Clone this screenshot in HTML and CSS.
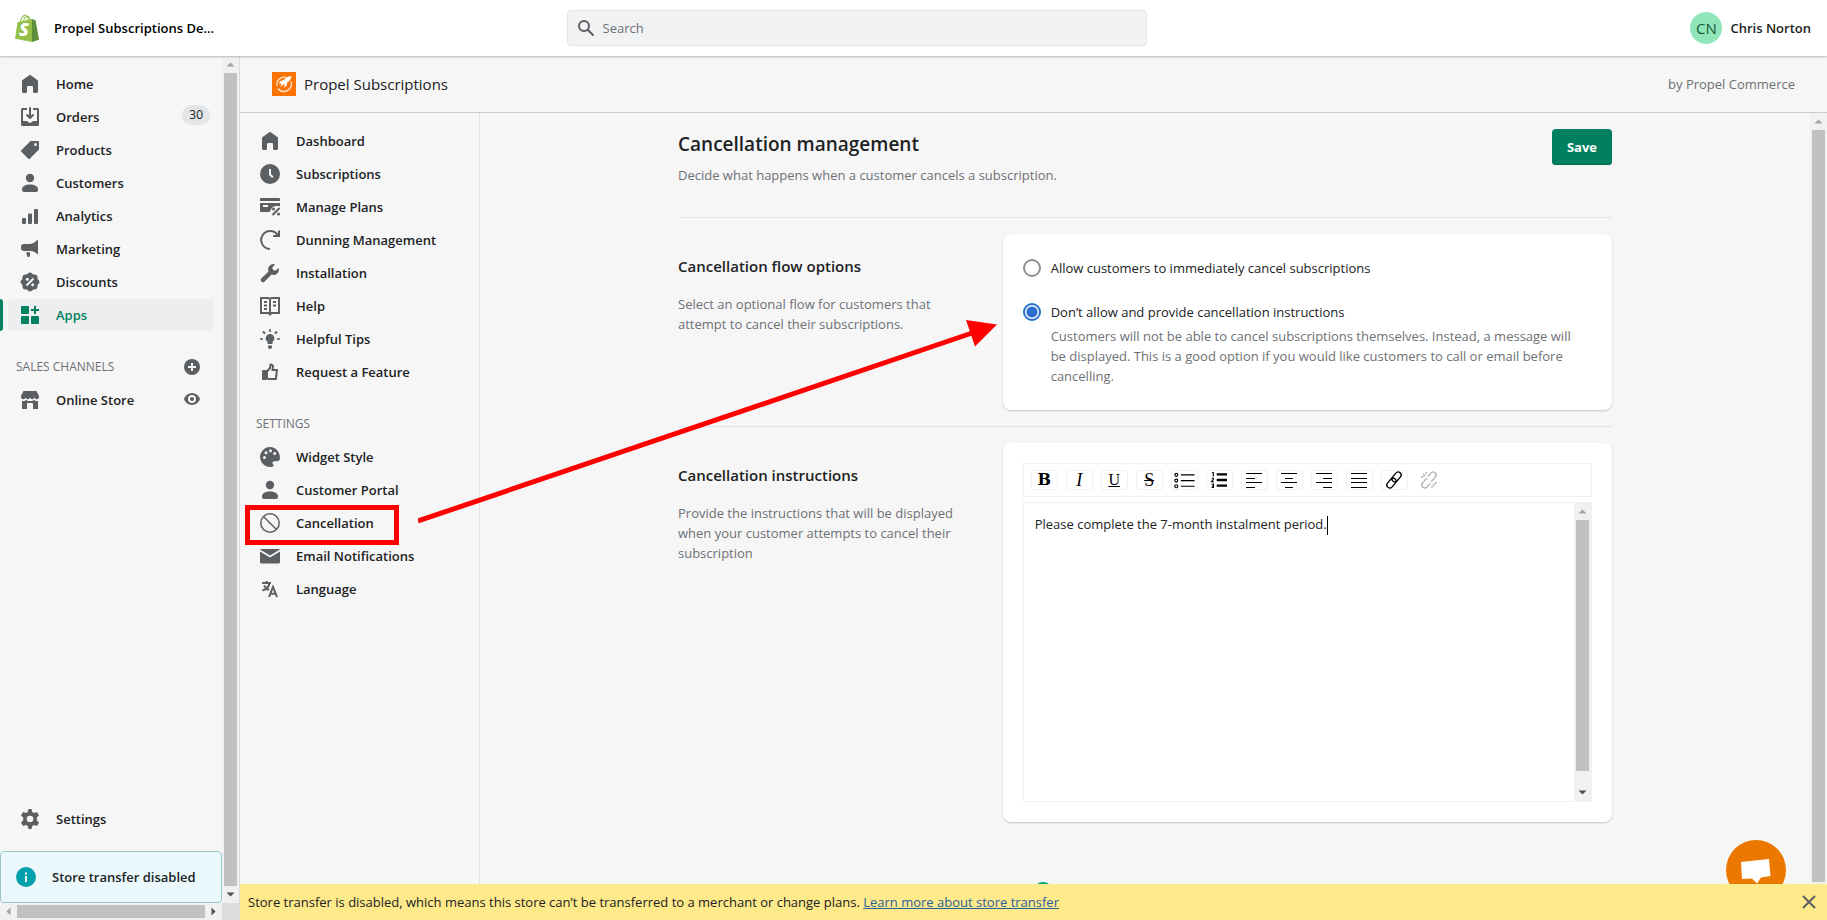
FILE: index.html
```
<!DOCTYPE html>
<html lang="en">
<head>
    <meta charset="UTF-8">
    <meta name="viewport" content="width=device-width, initial-scale=1.0">
    <title>Cancellation management</title>
    <link rel="stylesheet" href="styles.css">
</head>
<body>

    <!-- Shared icons -->
    <svg class="sprite" aria-hidden="true">
        <symbol id="home" viewBox="0 0 20 20"><path d="M18 7.261V17.5c0 .841-.672 1.5-1.5 1.5h-2c-.828 0-1.5-.659-1.5-1.5V13c0-1-1-1-1-1H8s-1 0-1 1v4.500c0 .841-.672 1.500-1.500 1.500h-2c-.828 0-1.500-.659-1.500-1.500V7.261a1.500 1.500 0 0 1 .615-1.210l6.590-4.820a1.481 1.481 0 0 1 1.590 0l6.590 4.820A1.500 1.500 0 0 1 18 7.260z"/></symbol>
        <symbol id="person" viewBox="0 0 20 20"><circle cx="10" cy="5" r="4.200"/><path d="M2 16c0-2.500 3.500-4.500 8-4.500s8 2 8 4.500v1a2 2 0 0 1-2 2H4a2 2 0 0 1-2-2z"/></symbol>
        <symbol id="arrow-up" viewBox="0 0 17 17"><path d="M4.500 10.500h8l-4-4z"/></symbol>
        <symbol id="arrow-down" viewBox="0 0 17 17"><path d="M4.500 6.500h8l-4 4z"/></symbol>
        <symbol id="arrow-left" viewBox="0 0 17 17"><path d="M10.500 4.500v8l-4-4z"/></symbol>
        <symbol id="arrow-right" viewBox="0 0 17 17"><path d="M6.500 4.500v8l4-4z"/></symbol>
    </svg>

    <header class="topbar">
        <div class="store">
            <svg class="store-logo" viewBox="0 0 24 28" aria-hidden="true">
                <path d="M5.500 8C6 3.500 8.500 1 10.500 1c1.500 0 2.500 2 2.700 6M8.500 7.500C9 4 11 2 12.700 2.300c1.600.3 2.300 2.500 2.300 4.500" fill="none" stroke="#95bf47" stroke-width="1.100"/>
                <path d="M2.500 8.200 17 5v23L0 24.800z" fill="#95bf47"/>
                <path d="m17 5 3.600 1.200L24 25.800 17 28z" fill="#5e8e3e"/>
                <text x="4" y="22" class="store-logo-letter">S</text>
            </svg>
            <span>Propel Subscriptions De...</span>
        </div>
        <label class="search">
            <svg class="icon" viewBox="0 0 20 20" aria-hidden="true"><path d="M8 12a4 4 0 1 1 0-8 4 4 0 0 1 0 8zm9.707 4.293-4.820-4.820A5.968 5.968 0 0 0 14 8 6 6 0 1 0 2 8a6 6 0 0 0 6 6 5.968 5.968 0 0 0 3.473-1.113l4.820 4.820a1 1 0 0 0 1.414-1.414z"/></svg>
            <input type="text" placeholder="Search" aria-label="Search">
        </label>
        <div class="user">
            <span class="avatar">CN</span>
            <span>Chris Norton</span>
        </div>
    </header>

    <div class="layout">
        <aside class="sidebar">
            <nav class="sidebar-nav">
                <a class="nav-item" href="#"><svg class="icon"><use href="#home"/></svg>Home</a>
                <a class="nav-item" href="#">
                    <svg class="icon" viewBox="0 0 20 20"><path d="M11 1a1 1 0 1 0-2 0v7.586L7.707 7.293a1 1 0 0 0-1.414 1.414l3 3a1 1 0 0 0 1.414 0l3-3a1 1 0 0 0-1.414-1.414L11 8.586V1z"/><path d="M3 14V3h4V1H2.500A1.500 1.500 0 0 0 1 2.500v15A1.500 1.500 0 0 0 2.500 19h15a1.500 1.500 0 0 0 1.500-1.500v-15A1.500 1.500 0 0 0 17.500 1H13v2h4v11h-3.500c-.775 0-1.388.662-1.926 1.244l-.110.120A1.994 1.994 0 0 1 10 16a1.994 1.994 0 0 1-1.463-.637l-.111-.120C7.888 14.664 7.275 14 6.500 14H3z"/></svg>
                    Orders
                    <span class="badge">30</span>
                </a>
                <a class="nav-item" href="#">
                    <svg class="icon" viewBox="0 0 20 20"><path fill-rule="evenodd" d="M10.293 1.293A1 1 0 0 1 11 1h7a1 1 0 0 1 1 1v7a1 1 0 0 1-.293.707l-9 9a1 1 0 0 1-1.414 0l-7-7a1 1 0 0 1 0-1.414l9-9zM15.500 6a1.500 1.500 0 1 0 0-3 1.500 1.500 0 0 0 0 3z"/></svg>
                    Products
                </a>
                <a class="nav-item" href="#"><svg class="icon"><use href="#person"/></svg>Customers</a>
                <a class="nav-item" href="#">
                    <svg class="icon" viewBox="0 0 20 20"><rect x="2" y="12" width="4" height="6" rx="1"/><rect x="8" y="7.500" width="4" height="10.500" rx="1"/><rect x="14" y="3" width="4" height="15" rx="1"/></svg>
                    Analytics
                </a>
                <a class="nav-item" href="#">
                    <svg class="icon" viewBox="0 0 20 20"><path d="M18 1.500v13.200a.5.5 0 0 1-.8.400C15 13 13 12.200 10.500 12H4a3 3 0 0 1-3-3V8a3 3 0 0 1 3-3h6c2.800-.2 5-1.700 7-3.700.400-.4 1-.3 1 .2zM6 13.200h4v3.300a1.500 1.500 0 0 1-2.600 1z"/></svg>
                    Marketing
                </a>
                <a class="nav-item" href="#">
                    <svg class="icon" viewBox="0 0 20 20"><rect x="2.500" y="2.500" width="15" height="15" rx="3"/><rect x="2.500" y="2.500" width="15" height="15" rx="3" transform="rotate(45 10 10)"/><path d="m6.500 13.500 7-7" class="line-light"/><circle cx="7.300" cy="7.300" r="1.500" class="fill-light"/><circle cx="12.700" cy="12.700" r="1.500" class="fill-light"/></svg>
                    Discounts
                </a>
                <a class="nav-item active" href="#">
                    <svg class="icon" viewBox="0 0 20 20"><rect x="1" y="1" width="8" height="8" rx="1"/><rect x="1" y="11" width="8" height="8" rx="1"/><rect x="11" y="11" width="8" height="8" rx="1"/><path d="M14 1h2v3h3v2h-3v3h-2V6h-3V4h3z"/></svg>
                    Apps
                </a>

                <div class="nav-heading">
                    SALES CHANNELS
                    <button class="icon-button" type="button" aria-label="Add sales channel">
                        <svg class="icon icon-small" viewBox="0 0 16 16"><circle cx="8" cy="8" r="8"/><path d="M8 4v8M4 8h8" class="line-light"/></svg>
                    </button>
                </div>
                <a class="nav-item" href="#">
                    <svg class="icon" viewBox="0 0 20 20"><path d="M3.500 1h13L19 6v1.500a2.300 2.300 0 0 1-4.500 0 2.300 2.300 0 0 1-4.500 0 2.300 2.300 0 0 1-4.500 0A2.300 2.300 0 0 1 1 7.500V6z"/><path d="M2 11h2.500L6 10l2 1h4l2-1 1.500 1H18v7.500a.5.5 0 0 1-.5.500H13v-5a1 1 0 0 0-1-1H8a1 1 0 0 0-1 1v5H2.500a.5.5 0 0 1-.5-.5z"/></svg>
                    Online Store
                    <svg class="icon icon-small nav-eye" viewBox="0 0 16 16"><path fill-rule="evenodd" d="M8 2C3.500 2 .5 6 0 8c.5 2 3.500 6 8 6s7.500-4 8-6c-.5-2-3.500-6-8-6zm0 10a4 4 0 1 1 0-8 4 4 0 0 1 0 8z"/><circle cx="8" cy="8" r="2"/></svg>
                </a>

                <a class="nav-item nav-settings" href="#">
                    <svg class="icon" viewBox="0 0 20 20"><path fill-rule="evenodd" d="M8.500 0h3l.8 3 1.700 1 3-.9 2 3.300-2.200 2.200v2.800l2.200 2.200-2 3.300-3-.9-1.700 1-.8 3h-3l-.8-3-1.700-1-3 .9-2-3.300 2.200-2.200V8.600L1 6.400l2-3.300 3 .9 1.700-1zM10 13.300a3.300 3.300 0 1 0 0-6.600 3.300 3.300 0 0 0 0 6.600z"/></svg>
                    Settings
                </a>
                <div class="transfer-notice">
                    <svg class="icon" viewBox="0 0 20 20"><circle cx="10" cy="10" r="10"/><path d="M9 9h2v6H9zM9 5.500h2v2H9z" class="fill-light"/></svg>
                    Store transfer disabled
                </div>
            </nav>
            <div class="scrollbar" aria-hidden="true">
                <svg class="scroll-arrow muted"><use href="#arrow-up"/></svg>
                <div class="scroll-track"><div class="scroll-thumb"></div></div>
                <svg class="scroll-arrow"><use href="#arrow-down"/></svg>
            </div>
            <div class="scrollbar horizontal" aria-hidden="true">
                <svg class="scroll-arrow muted"><use href="#arrow-left"/></svg>
                <div class="scroll-track"><div class="scroll-thumb"></div></div>
                <svg class="scroll-arrow"><use href="#arrow-right"/></svg>
            </div>
            <div class="scroll-corner"></div>
        </aside>

        <main class="app">
            <div class="app-header">
                <svg class="app-logo" viewBox="0 0 24 24" aria-hidden="true">
                    <rect width="24" height="24" fill="#f97306"/>
                    <path d="M14 5.300A7.500 7.500 0 0 0 5 14M19 9.500A7.500 7.500 0 0 1 9.500 19M6 16.500A7.500 7.500 0 0 0 15 18.800" fill="none" stroke="#ffe3cc" stroke-width="1.300"/>
                    <path d="M19.500 4c-3.600.3-6.200 1.600-7.700 4.100L8.600 9l-2 2.800 3-.3-1.300 3.800 3.200-3.100 1.200.2-.6 3.400 2.600-2.400.4-2.800c2.400-1.200 4-3.200 4.400-6.600z" fill="#fff"/>
                </svg>
                <span class="app-name">Propel Subscriptions</span>
                <span class="app-author">by Propel Commerce</span>
            </div>

            <div class="app-body">
                <nav class="app-nav">
                    <a class="nav-item" href="#"><svg class="icon"><use href="#home"/></svg>Dashboard</a>
                    <a class="nav-item" href="#">
                        <svg class="icon" viewBox="0 0 20 20"><circle cx="10" cy="10" r="10"/><path d="M10 5v5.500l2.800 2.800" class="line-light"/></svg>
                        Subscriptions
                    </a>
                    <a class="nav-item" href="#">
                        <svg class="icon" viewBox="0 0 20 20"><path d="M1 1h18a1 1 0 0 1 1 1v2H0V2a1 1 0 0 1 1-1z"/><path fill-rule="evenodd" d="M0 6h20v3.500c-4-1-7-.3-8.500 2L9.500 15H1a1 1 0 0 1-1-1zm3 2v2h5V8z"/><path d="m12.500 18 7-7" class="line"/><circle cx="13.500" cy="12" r="1.500"/><circle cx="18.500" cy="17" r="1.500"/></svg>
                        Manage Plans
                    </a>
                    <a class="nav-item" href="#">
                        <svg class="icon" viewBox="0 0 20 20"><path d="M10 19A9 9 0 1 1 18 5.500" class="line"/><path d="M19 .5V6h-5.800" class="line"/></svg>
                        Dunning Management
                    </a>
                    <a class="nav-item" href="#">
                        <svg class="icon" viewBox="0 0 20 20"><path d="M18.600 4.900 15.800 7.500 13 7l-.6-2.800 2.700-2.800a5.300 5.300 0 0 0-6.600 7L1.300 15.600a2.200 2.200 0 0 0 3.100 3.100l7.200-7.200a5.300 5.300 0 0 0 7-6.600z"/></svg>
                        Installation
                    </a>
                    <a class="nav-item" href="#">
                        <svg class="icon" viewBox="0 0 20 20"><path d="M1 2h7.500L10 3l1.500-1H19v15h-7.500L10 18.500 8.500 17H1zM10 3v14" class="line"/><path d="M4 5h3v2H4zm0 3.500h3v2H4zM4 12h3v2H4zm9-7h3v2h-3zm0 3.500h3v2h-3z"/></svg>
                        Help
                    </a>
                    <a class="nav-item" href="#">
                        <svg class="icon" viewBox="0 0 20 20"><path d="M10 5a4.300 4.300 0 0 0-2.500 7.800V15h5v-2.200A4.300 4.300 0 0 0 10 5zM8 16.500h4V18a2 2 0 0 1-4 0zM9.200 0h1.600v3H9.200zM0 9.200h3v1.600H0zm17 0h3v1.600h-3z"/><path d="m3 2.500 2 2.200M17 2.500l-2 2.200" class="line"/></svg>
                        Helpful Tips
                    </a>
                    <a class="nav-item" href="#">
                        <svg class="icon" viewBox="0 0 20 20"><rect x="2" y="8" width="5" height="10" rx="1"/><path d="M7 9.500 10 6l.6-3.500c2 0 2.700 1.500 2.300 3L12.500 8H17l-1.200 9H8.500L7 16z" class="line"/></svg>
                        Request a Feature
                    </a>

                    <div class="nav-heading">SETTINGS</div>
                    <a class="nav-item" href="#">
                        <svg class="icon" viewBox="0 0 20 20"><path d="M10 0a10 10 0 1 0 2.500 19.700c1.500-.5 1.200-1.700.5-2.400-1-1.200-.5-3 1.500-3h2.300A3.300 3.300 0 0 0 20 11C20 4.500 15.500 0 10 0z"/><g class="fill-light"><circle cx="4.500" cy="10.500" r="1.500"/><circle cx="6" cy="5.800" r="1.500"/><circle cx="10.500" cy="3.800" r="1.500"/><circle cx="14.700" cy="6.500" r="1.500"/></g></svg>
                        Widget Style
                    </a>
                    <a class="nav-item" href="#"><svg class="icon"><use href="#person"/></svg>Customer Portal</a>
                    <a class="nav-item highlighted" href="#">
                        <svg class="icon" viewBox="0 0 20 20"><circle cx="10" cy="10" r="9.200" class="line-thin"/><path d="m3.500 3.500 13 13" class="line-thin"/></svg>
                        Cancellation
                    </a>
                    <a class="nav-item" href="#">
                        <svg class="icon" viewBox="0 0 20 20"><path d="M0 5.500V16a1.500 1.500 0 0 0 1.500 1.500h17A1.500 1.500 0 0 0 20 16V5.500l-10 6z"/><path d="M0 3.600 10 9.500l10-5.900A1.500 1.500 0 0 0 18.500 3h-17A1.500 1.500 0 0 0 0 3.600z"/></svg>
                        Email Notifications
                    </a>
                    <a class="nav-item" href="#">
                        <svg class="icon" viewBox="0 0 20 20"><path d="M2 4h9M6.500 2v2M9.500 4C9 7.500 6 10.500 2.500 11.500M4 6.500C5.500 9 7 10 9 11" class="line"/><path d="m9 18 4-10 4 10M10.500 14.800h5" class="line"/></svg>
                        Language
                    </a>
                </nav>

                <div class="page">
                    <div class="page-header">
                        <div>
                            <h1>Cancellation management</h1>
                            <p>Decide what happens when a customer cancels a subscription.</p>
                        </div>
                        <button class="save-button" type="button">Save</button>
                    </div>

                    <section class="section">
                        <div class="section-text">
                            <h2>Cancellation flow options</h2>
                            <p>Select an optional flow for customers that attempt to cancel their subscriptions.</p>
                        </div>
                        <div class="card options">
                            <div class="option">
                                <input type="radio" name="flow" id="flow-allow">
                                <label for="flow-allow">Allow customers to immediately cancel subscriptions</label>
                            </div>
                            <div class="option">
                                <input type="radio" name="flow" id="flow-deny" aria-describedby="flow-deny-help" checked>
                                <label for="flow-deny">Don’t allow and provide cancellation instructions</label>
                                <p id="flow-deny-help">Customers will not be able to cancel subscriptions themselves. Instead, a message will be displayed. This is a good option if you would like customers to call or email before cancelling.</p>
                            </div>
                        </div>
                    </section>

                    <section class="section">
                        <div class="section-text">
                            <h2 id="instructions-title">Cancellation instructions</h2>
                            <p>Provide the instructions that will be displayed when your customer attempts to cancel their subscription</p>
                        </div>
                        <div class="card">
                            <div class="toolbar">
                                <button type="button" class="bold" aria-label="Bold">B</button>
                                <button type="button" class="italic" aria-label="Italic">I</button>
                                <button type="button" class="underline" aria-label="Underline">U</button>
                                <button type="button" class="strike" aria-label="Strikethrough">S</button>
                                <button type="button" aria-label="Bulleted list"><svg viewBox="0 0 18 14"><path d="M6 2.500h12M6 7.500h12M6 12.500h12" class="tool-line"/><g class="tool-dot"><circle cx="2" cy="2.500" r="1.300"/><circle cx="2" cy="7.500" r="1.300"/><circle cx="2" cy="12.500" r="1.300"/></g></svg></button>
                                <button type="button" aria-label="Numbered list"><svg viewBox="0 0 14 14"><path d="M5 2h9M5 7h9M5 12h9" class="tool-heavy"/><path d="M1 .5h1V4M.5 5.500H2v1.200L.5 8.500H2.500M.5 10.500H2.200v3H.5M1 12h1" class="tool-dot"/></svg></button>
                                <button type="button" aria-label="Align left"><svg viewBox="0 0 16 16"><path d="M0 1.500h16M0 6.500h9M0 10.500h16M0 15.500h9" class="tool-line"/></svg></button>
                                <button type="button" aria-label="Align center"><svg viewBox="0 0 16 16"><path d="M0 1.500h16M4 6.500h8M0 10.500h16M4 15.500h8" class="tool-line"/></svg></button>
                                <button type="button" aria-label="Align right"><svg viewBox="0 0 16 16"><path d="M0 1.500h16M7 6.500h9M0 10.500h16M7 15.500h9" class="tool-line"/></svg></button>
                                <button type="button" aria-label="Justify"><svg viewBox="0 0 16 16"><path d="M0 1.500h16M0 6.500h16M0 10.500h16M0 15.500h16" class="tool-line"/></svg></button>
                                <button type="button" aria-label="Link"><svg viewBox="0 0 16 16"><g transform="rotate(-50 8 8)" class="tool-link"><rect x="-1.500" y="5" width="11" height="6" rx="3"/><rect x="6.500" y="5" width="11" height="6" rx="3"/></g></svg></button>
                                <button type="button" aria-label="Unlink" disabled><svg viewBox="0 0 16 16"><g transform="rotate(-50 8 8)" class="tool-link"><path d="M6 11H1.500a3 3 0 0 1 0-6H6a2.500 2.500 0 0 1 2 1M10 5h4.500a3 3 0 0 1 0 6H10a2.500 2.500 0 0 1-2-1"/></g><path d="M2 2l2 2M5 0v2.500M0 5h2.500M14 14l-2-2M11 16v-2.500M16 11h-2.500" class="tool-link"/></svg></button>
                            </div>
                            <div class="editor">
                                <div class="editor-text" role="textbox" aria-multiline="true" aria-labelledby="instructions-title" contenteditable="true">Please complete the 7-month instalment period.<span class="caret"></span></div>
                                <div class="scrollbar" aria-hidden="true">
                                    <svg class="scroll-arrow muted"><use href="#arrow-up"/></svg>
                                    <div class="scroll-track"><div class="scroll-thumb partial"></div></div>
                                    <svg class="scroll-arrow"><use href="#arrow-down"/></svg>
                                </div>
                            </div>
                        </div>
                    </section>

                    <div class="footer-help"><span class="footer-icon"></span></div>
                </div>

                <div class="scrollbar page-scrollbar" aria-hidden="true">
                    <svg class="scroll-arrow muted"><use href="#arrow-up"/></svg>
                    <div class="scroll-track"><div class="scroll-thumb"></div></div>
                </div>

                <button class="chat-button" type="button" aria-label="Open chat">
                    <svg viewBox="0 0 60 60"><path d="m15 22 28-3 1.500 17-9.500 1.500-4 6-5-5-10 .5z"/></svg>
                </button>
            </div>

            <div class="banner">
                <span>Store transfer is disabled, which means this store can’t be transferred to a merchant or change plans. <a href="#">Learn more about store transfer</a></span>
                <button class="icon-button" type="button" aria-label="Dismiss">
                    <svg class="icon icon-small" viewBox="0 0 16 16"><path d="m2 2 12 12M14 2 2 14" class="line"/></svg>
                </button>
            </div>
        </main>
    </div>

    <!-- Pointer from the Cancellation menu item to the options card -->
    <svg class="pointer" viewBox="0 0 580 204" aria-hidden="true">
        <path d="M0 201 560 11" fill="none" stroke="#fe0000" stroke-width="5"/>
        <path d="m548 0 31 4.500-22 22z" fill="#fe0000"/>
    </svg>

</body>
</html>
```

FILE: styles.css
```
* {
    box-sizing: border-box;
}

body {
    margin: 0;
    height: 100vh;
    display: flex;
    flex-direction: column;
    overflow: hidden;
    position: relative;
    font-family: "Open Sans", "Noto Sans", sans-serif;
    font-size: 13px;
    line-height: 20px;
    color: #202223;
    background-color: #f6f6f7;
}

h1, h2, p {
    margin: 0;
}

button, input {
    font: inherit;
}

.sprite {
    display: none;
}

/* Icons */
.icon {
    width: 20px;
    height: 20px;
    flex: none;
    fill: #5c5f62;
    stroke: none;
}

.icon-small {
    width: 16px;
    height: 16px;
}

.icon .line, .icon .line-thin {
    fill: none;
    stroke: #5c5f62;
    stroke-width: 2;
}

.icon .line-thin {
    stroke-width: 1.5;
}

.icon .line-light {
    fill: none;
    stroke: #f6f6f7;
    stroke-width: 2;
}

.icon .fill-light {
    fill: #f6f6f7;
}

.icon-button {
    display: flex;
    padding: 0;
    border: none;
    background: none;
    cursor: pointer;
}

/* Top bar */
.topbar {
    height: 56px;
    flex: none;
    display: grid;
    grid-template-columns: 240px 1fr 354px;
    align-items: center;
    position: relative;
    z-index: 1;
    background-color: #fff;
    box-shadow: 0 1px 2px rgba(0, 0, 0, 0.25);
    font-weight: 600;
}

.store {
    display: flex;
    align-items: center;
    gap: 15px;
    padding-left: 15px;
    color: #000;
}

.store-logo {
    width: 24px;
    height: 28px;
}

.store-logo-letter {
    font-size: 18px;
    font-weight: 800;
    font-style: italic;
    fill: #fff;
}

.search {
    width: 100%;
    max-width: 580px;
    height: 36px;
    margin: 0 auto;
    display: flex;
    align-items: center;
    gap: 7px;
    padding: 0 8px;
    border: 1px solid #e1e3e5;
    border-radius: 4px;
    background-color: #f1f2f3;
    font-weight: 400;
}

.search input {
    flex: 1;
    padding: 0;
    border: none;
    outline: none;
    background: none;
}

.search input::placeholder {
    color: #6d7175;
    opacity: 1;
}

.user {
    display: flex;
    align-items: center;
    justify-content: flex-end;
    gap: 8px;
    padding-right: 16px;
}

.avatar {
    width: 32px;
    height: 32px;
    border-radius: 50%;
    background-color: #90e6b8;
    color: #17593d;
    font-size: 15px;
    font-weight: 400;
    line-height: 32px;
    text-align: center;
}

/* Layout */
.layout {
    flex: 1;
    min-height: 0;
    display: flex;
}

.sidebar {
    width: 240px;
    flex: none;
    display: grid;
    grid-template: 1fr 17px / 1fr 17px;
    border-right: 1px solid #d9dadc;
}

.sidebar-nav {
    display: flex;
    flex-direction: column;
    padding-top: 12px;
}

.nav-item {
    position: relative;
    height: 32px;
    margin: 0 8px 1px;
    padding: 0 4px 0 12px;
    display: flex;
    align-items: center;
    gap: 16px;
    border-radius: 4px;
    color: #202223;
    font-weight: 600;
    text-decoration: none;
}

.nav-item.active {
    background-color: #edeeef;
    color: #008060;
}

.nav-item.active .icon {
    fill: #008060;
}

.nav-item.active::before {
    content: "";
    position: absolute;
    top: 0;
    left: -8px;
    width: 3px;
    height: 100%;
    border-radius: 0 4px 4px 0;
    background-color: #008060;
}

.badge {
    margin: 0 0 4px auto;
    padding: 0 7px;
    border-radius: 10px;
    background-color: #e4e5e7;
    font-size: 12px;
    font-weight: 400;
}

.nav-eye {
    margin: 0 10px 2px auto;
}

.nav-heading {
    height: 32px;
    margin: 19px 22px 1px 16px;
    display: flex;
    align-items: center;
    justify-content: space-between;
    color: #6d7175;
    font-size: 12px;
}

.nav-settings {
    margin-top: auto;
}

.transfer-notice {
    height: 52px;
    margin-top: 15px;
    padding-left: 15px;
    display: flex;
    align-items: center;
    gap: 16px;
    border: 1px solid #98c6cd;
    border-radius: 4px;
    background-color: #ebf9fc;
    font-weight: 600;
}

.transfer-notice .icon {
    fill: #00a0ac;
}

/* Scrollbars */
.scrollbar {
    width: 17px;
    display: flex;
    flex-direction: column;
    background-color: #f1f1f1;
}

.scroll-arrow {
    width: 17px;
    height: 17px;
    flex: none;
    fill: #505050;
}

.scroll-arrow.muted {
    fill: #a3a3a3;
}

.scroll-track {
    flex: 1;
    padding: 0 2px;
}

.scroll-thumb {
    height: 100%;
    background-color: #c1c1c1;
}

.scroll-thumb.partial {
    height: 95%;
}

.scrollbar.horizontal {
    width: auto;
    flex-direction: row;
}

.horizontal .scroll-track {
    padding: 2px 0;
}

.scroll-corner {
    background-color: #dcdcdc;
}

/* App frame */
.app {
    flex: 1;
    min-width: 0;
    display: flex;
    flex-direction: column;
}

.app-header {
    height: 57px;
    flex: none;
    display: flex;
    align-items: center;
    padding: 0 32px;
    border-bottom: 1px solid #c9cccf;
}

.app-logo {
    width: 24px;
    height: 24px;
}

.app-name {
    margin-left: 8px;
    font-size: 15px;
}

.app-author {
    margin-left: auto;
    color: #6d7175;
}

.app-body {
    flex: 1;
    min-height: 0;
    display: flex;
    position: relative;
    overflow: hidden;
}

.app-nav {
    width: 240px;
    flex: none;
    padding-top: 12px;
    border-right: 1px solid #e1e3e5;
}

.app-nav .nav-heading {
    margin-top: 20px;
}

/* Red frame round the menu item */
.highlighted::after {
    content: "";
    box-sizing: border-box;
    position: absolute;
    top: -2px;
    left: -3px;
    width: 154px;
    height: 40px;
    border: 5px solid #fe0000;
}

.page {
    flex: 1;
    min-width: 0;
    max-width: 998px;
    margin: 0 auto;
    padding: 16px 32px 0;
}

.page-header {
    display: flex;
    justify-content: space-between;
    align-items: flex-start;
    padding-bottom: 32px;
}

.page-header h1 {
    margin-bottom: 6px;
    font-size: 19px;
    font-weight: 600;
    line-height: 30px;
}

.page-header p, .section-text p, .option p {
    color: #6d7175;
}

.save-button {
    height: 36px;
    padding: 0 15px;
    border: none;
    border-radius: 4px;
    background-color: #008060;
    box-shadow: inset 0 -1px 0 #00664c;
    color: #fff;
    font-weight: 700;
    cursor: pointer;
}

.section {
    display: grid;
    grid-template-columns: 1fr 2fr;
    gap: 20px;
    padding: 16px 0;
    border-top: 1px solid #e1e3e5;
}

.section-text {
    padding: 20px 20px 0 0;
}

.section-text h2 {
    margin-bottom: 16px;
    font-size: 15px;
    font-weight: 600;
    line-height: 24px;
}

.card {
    min-width: 0;
    padding: 20px;
    border-radius: 8px;
    background-color: #fff;
    box-shadow: 0 1px 2px rgba(0, 0, 0, 0.2);
}

.options {
    display: flex;
    flex-direction: column;
    gap: 24px;
    padding: 24px 20px;
}

.option {
    display: grid;
    grid-template-columns: 18px 1fr;
    align-items: center;
    column-gap: 10px;
}

.option input {
    appearance: none;
    width: 18px;
    height: 18px;
    margin: 0;
    border: 2px solid #8c9196;
    border-radius: 50%;
    background-color: #fff;
}

.option input:checked {
    border-color: #2c6ecb;
    background: radial-gradient(circle, #2c6ecb 5px, #fff 6px);
}

.option p {
    grid-column: 2;
    margin-top: 4px;
    padding-right: 10px;
}

/* Rich text editor */
.toolbar {
    display: flex;
    flex-wrap: wrap;
    gap: 8px;
    margin-bottom: 5px;
    padding: 6px 7px;
    border: 1px solid #f1f1f1;
}

.toolbar button {
    width: 27px;
    height: 20px;
    padding: 0;
    display: flex;
    align-items: center;
    justify-content: center;
    border: 1px solid #f1f1f1;
    border-radius: 2px;
    background-color: #fff;
    color: #000;
    font-family: "Liberation Serif", serif;
    font-size: 18px;
    line-height: 16px;
}

.toolbar button:disabled {
    border-color: transparent;
    opacity: 0.3;
}

.toolbar svg {
    height: 16px;
    overflow: visible;
}

.toolbar .bold {
    font-family: "DejaVu Serif", serif;
    font-size: 16px;
    font-weight: 700;
}

.toolbar .italic {
    font-style: italic;
}

.toolbar .underline {
    font-size: 16px;
    text-decoration: underline;
}

.toolbar .strike {
    text-decoration: line-through;
}

.tool-line, .tool-heavy, .tool-dot, .tool-link {
    fill: none;
    stroke: #000;
    stroke-width: 1;
}

.tool-heavy {
    stroke-width: 2;
}

.tool-link {
    stroke-width: 1.3;
}

.editor {
    height: 300px;
    display: flex;
    border: 1px solid #f1f1f1;
}

.editor-text {
    flex: 1;
    padding: 11px;
    outline: none;
}

.caret {
    display: inline-block;
    height: 19px;
    border-left: 1px solid #000;
    vertical-align: middle;
}

.footer-help {
    width: 224px;
    margin: 0 auto;
    padding-top: 44px;
}

.footer-icon {
    display: block;
    width: 20px;
    height: 20px;
    border-radius: 50%;
    background-color: #00a47c;
}

.page-scrollbar .scroll-track {
    padding-bottom: 2px;
}

.chat-button {
    position: absolute;
    right: 41px;
    bottom: -16px;
    width: 60px;
    height: 60px;
    padding: 0;
    border: none;
    border-radius: 50%;
    background-color: #ec7800;
    cursor: pointer;
}

.chat-button svg {
    display: block;
    fill: #fff;
}

.banner {
    min-height: 36px;
    display: flex;
    align-items: center;
    justify-content: space-between;
    padding: 0 10px 0 8px;
    background-color: #fee98b;
}

.banner a {
    color: #2c5f9e;
}

/* Pointer arrow */
.pointer {
    position: absolute;
    top: 320px;
    left: 418px;
    width: 580px;
    height: 204px;
    z-index: 2;
    pointer-events: none;
}
```
